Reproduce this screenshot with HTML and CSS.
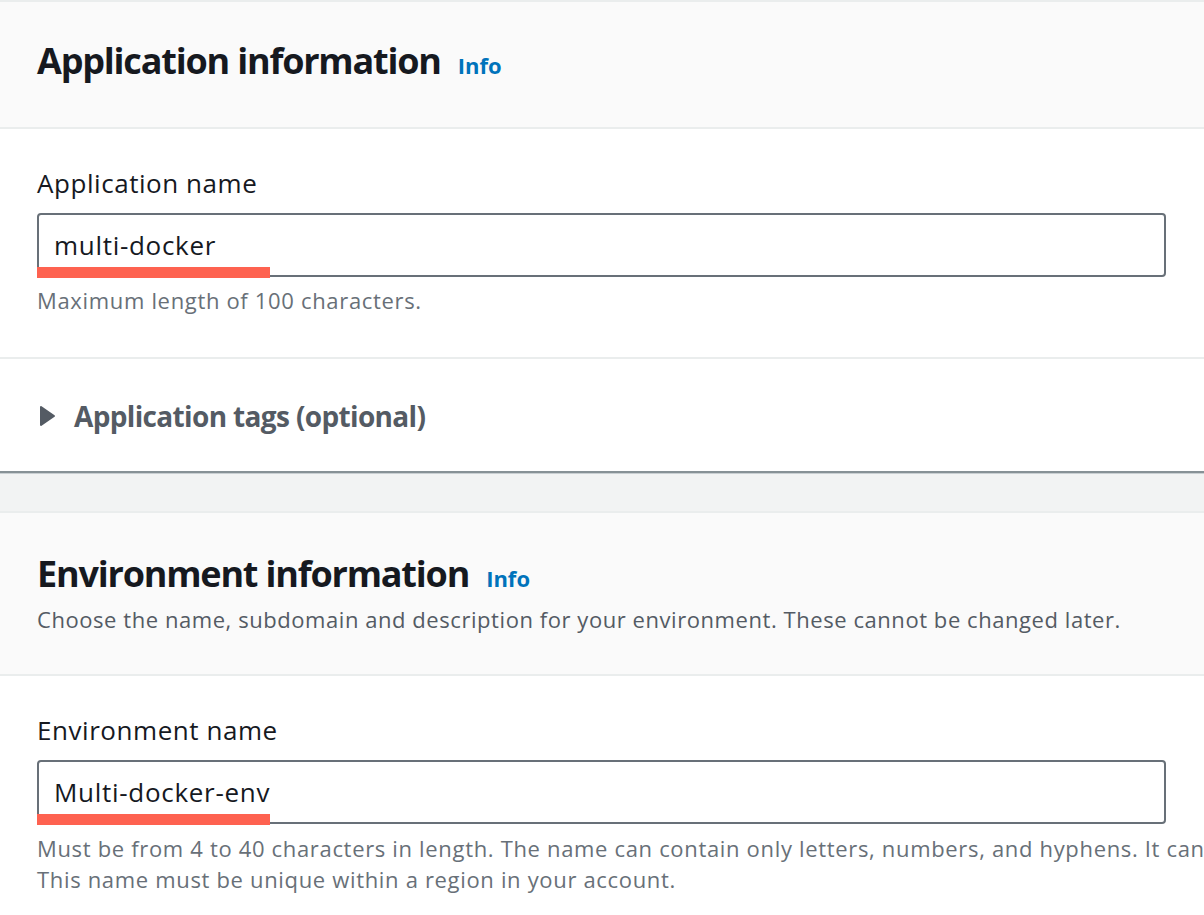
FILE: index.html
```html
<!DOCTYPE html>
<html lang="en">
<head>
<meta charset="utf-8">
<title>Create application</title>
<link rel="stylesheet" href="styles.css">
</head>
<body>
<div class="page">
  <section class="container">
    <header class="container-header">
      <h2 class="heading">Application information <a class="info" href="#">Info</a></h2>
    </header>
    <div class="container-body">
      <div class="field">
        <label class="label" for="app-name">Application name</label>
        <div class="input-wrap">
          <input class="input" id="app-name" type="text" value="multi-docker">
          <span class="mark"></span>
        </div>
        <div class="hint">Maximum length of 100 characters.</div>
      </div>
    </div>
    <div class="expander">
      <svg class="caret" width="20" height="22" viewBox="0 0 20 22" aria-hidden="true"><polygon points="4,2 17,11 4,20" fill="#545b64" stroke="#545b64" stroke-width="2" stroke-linejoin="round"/></svg>
      <span class="expander-title">Application tags (optional)</span>
    </div>
  </section>

  <section class="container">
    <header class="container-header">
      <h2 class="heading">Environment information <a class="info" href="#">Info</a></h2>
      <p class="description">Choose the name, subdomain and description for your environment. These cannot be changed later.</p>
    </header>
    <div class="container-body">
      <div class="field">
        <label class="label" for="env-name">Environment name</label>
        <div class="input-wrap">
          <input class="input" id="env-name" type="text" value="Multi-docker-env">
          <span class="mark"></span>
        </div>
        <div class="hint">
          <div class="hint-line">Must be from 4 to 40 characters in length. The name can contain only letters, numbers, and hyphens. It can't start or end with a hyphen (-).</div>
          <div class="hint-line">This name must be unique within a region in your account.</div>
        </div>
      </div>
    </div>
  </section>
</div>
</body>
</html>
```
FILE: styles.css
```css
* { box-sizing: border-box; }

html, body {
  margin: 0;
  padding: 0;
  background: #f2f3f3;
  overflow: hidden;
}

body {
  font-family: "Open Sans", "Noto Sans", sans-serif;
  color: #16191f;
}

.page {
  width: 1320px;
  display: flex;
  flex-direction: column;
  gap: 38px;
}

.container {
  background: #ffffff;
  border-top: 2px solid #eaeded;
  border-bottom: 2px solid #879196;
  box-shadow: 0 1px 0 #c9cfd2;
}

.container-header {
  background: #fafafa;
  border-bottom: 2px solid #eaeded;
  padding: 37px 37px 40px;
}

.container + .container .container-header {
  padding-top: 39px;
  padding-bottom: 41px;
}

.heading {
  margin: 0;
  font-size: 36px;
  line-height: 44px;
  font-weight: 700;
  letter-spacing: -1.2px;
  color: #16191f;
  display: flex;
  align-items: baseline;
  gap: 17px;
}

.info {
  font-size: 22px;
  font-weight: 700;
  letter-spacing: 0;
  color: #0073bb;
  text-decoration: none;
}

.description {
  margin: 5px 0 0;
  font-size: 22px;
  line-height: 28px;
  color: #545b64;
  letter-spacing: 0.56px;
}

.container-body {
  padding: 38px 37px 41px;
  border-bottom: 2px solid #eaeded;
}

.container + .container .container-body {
  border-bottom: 0;
  padding-bottom: 60px;
}

.field {
  display: flex;
  flex-direction: column;
}

.label {
  font-size: 26px;
  line-height: 32px;
  color: #16191f;
  letter-spacing: 0.55px;
}

.input-wrap {
  position: relative;
  width: 1129px;
  margin-top: 14px;
}

.input {
  display: block;
  width: 100%;
  height: 64px;
  border: 2px solid #687078;
  border-radius: 4px;
  padding: 0 15px;
  font-family: inherit;
  font-size: 26px;
  letter-spacing: 0.7px;
  color: #16191f;
  background: #ffffff;
  outline: none;
}

.mark {
  position: absolute;
  left: 0;
  bottom: -1px;
  width: 233px;
  height: 11px;
  background: #fe6250;
}

.hint {
  margin-top: 8px;
  font-size: 22px;
  line-height: 31px;
  color: #687078;
  letter-spacing: 0.67px;
  white-space: nowrap;
}

.container + .container .hint {
  margin-top: 9px;
}

.expander {
  display: flex;
  align-items: center;
  gap: 17px;
  padding: 40px 37px 38px;
  height: 112px;
}

.caret {
  display: block;
  flex: none;
}

.expander-title {
  font-size: 28px;
  line-height: 34px;
  font-weight: 700;
  letter-spacing: -0.65px;
  color: #545b64;
}
```
